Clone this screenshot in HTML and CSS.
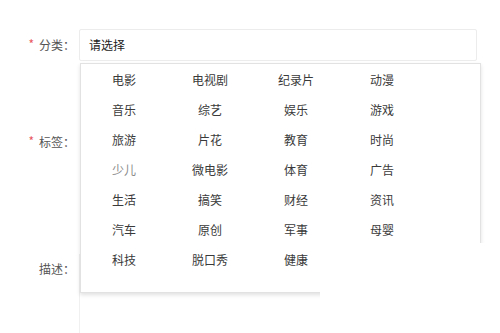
FILE: index.html
```html
<!DOCTYPE html>
<html lang="zh-CN">
<head>
  <meta charset="UTF-8" />
  <title>分类选择</title>
  <link rel="stylesheet" href="styles.css">
</head>
<body>
  <form class="form">
    <div class="form-row row-type">
      <label class="label"><span class="req">*</span>分类：</label>
      <div class="field">
        <div class="select">请选择</div>
        <div class="dropdown">
          <ul class="options">
            <li>电影</li><li>电视剧</li><li>纪录片</li><li>动漫</li>
            <li>音乐</li><li>综艺</li><li>娱乐</li><li>游戏</li>
            <li>旅游</li><li>片花</li><li>教育</li><li>时尚</li>
            <li class="dim">少儿</li><li>微电影</li><li>体育</li><li>广告</li>
            <li>生活</li><li>搞笑</li><li>财经</li><li>资讯</li>
            <li>汽车</li><li>原创</li><li>军事</li><li>母婴</li>
            <li>科技</li><li>脱口秀</li><li>健康</li>
          </ul>
        </div>
      </div>
    </div>

    <div class="form-row row-tags">
      <label class="label"><span class="req">*</span>标签：</label>
      <div class="field"></div>
    </div>

    <div class="form-row row-desc">
      <label class="label">描述：</label>
      <div class="field">
        <div class="textarea"></div>
      </div>
    </div>
  </form>
</body>
</html>
```

FILE: styles.css
```css
* {
  margin: 0;
  padding: 0;
  box-sizing: border-box;
}

html, body {
  height: 100%;
  overflow: hidden;
}

body {
  background: #fff;
  font-family: "Microsoft YaHei", "Noto Sans CJK SC", sans-serif;
  font-size: 12px;
  color: #3a3a3a;
}

.form {
  padding-top: 29px;
}

.form-row {
  display: flex;
}

.label {
  width: 79px;
  padding-right: 4px;
  text-align: right;
  color: #555;
  line-height: 32px;
}

.req {
  color: #e8585f;
  margin-right: 5px;
  position: relative;
  top: -1px;
}

.field {
  position: relative;
  width: 398px;
}

.row-type {
  height: 32px;
  margin-bottom: 66px;
}

.select {
  height: 32px;
  line-height: 30px;
  padding-left: 9px;
  border: 1px solid #ececec;
  border-radius: 2px;
  color: #222;
}

.dropdown {
  position: absolute;
  top: 34px;
  left: 1px;
  width: 401px;
  height: 230px;
  background: #fff;
  border: 1px solid #e2e2e2;
  box-shadow: 0 2px 4px rgba(0, 0, 0, 0.12);
  padding-top: 1px;
  z-index: 2;
  clip-path: polygon(-10px -10px, 411px -10px, 411px 180px, 240px 180px, 240px 240px, -10px 240px);
}

.options {
  list-style: none;
  display: grid;
  grid-template-columns: repeat(4, 86px);
}

.options li {
  height: 30px;
  line-height: 30px;
  text-align: center;
  color: #3a3a3a;
}

.options li.dim {
  color: #8a8a8a;
}

.row-tags {
  height: 30px;
  margin-bottom: 97px;
}

.row-tags .label,
.row-desc .label {
  line-height: 30px;
}

.textarea {
  height: 80px;
  border-left: 1px solid #f0f0f0;
}
```
